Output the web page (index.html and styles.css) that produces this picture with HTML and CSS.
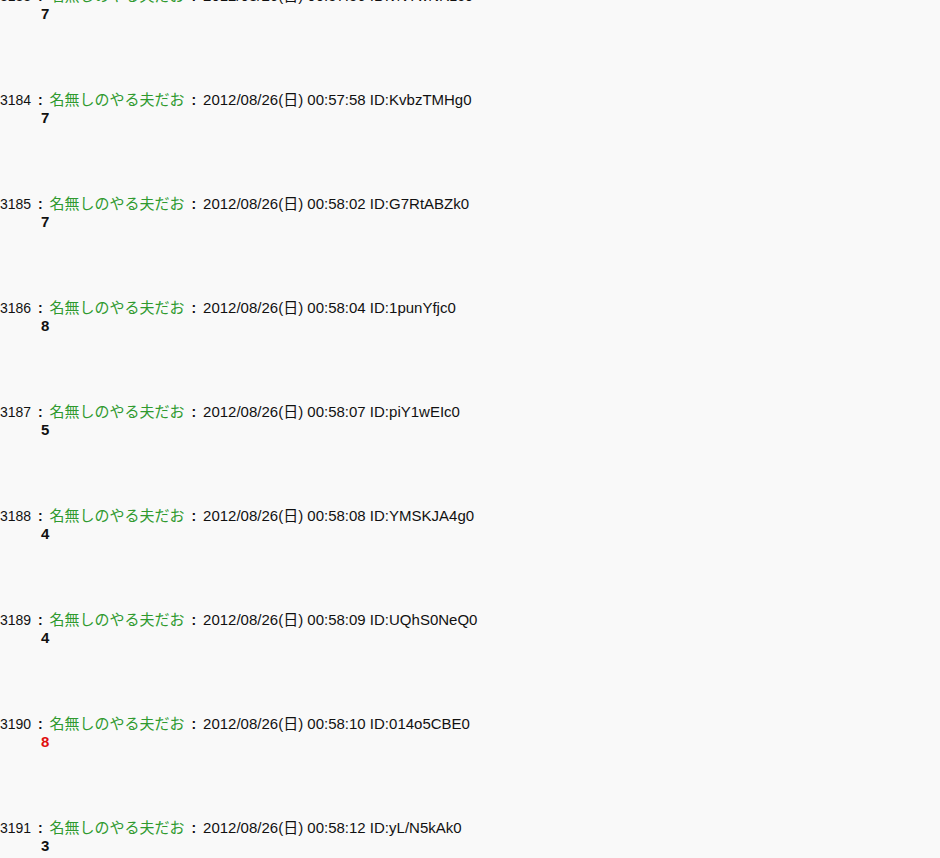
FILE: index.html
```html
<!DOCTYPE html>
<html lang="ja">
<head>
    <meta charset="UTF-8">
    <title>やる夫スレ</title>
    <link rel="stylesheet" href="styles.css">
</head>
<body>
    <dl class="thread">
        <dt>3183 <b class="sep">:</b> <span class="name">名無しのやる夫だお</span> <b class="sep">:</b> <span class="date">2012/08/26(日) 00:57:56 ID:vNYwNRzc0</span></dt>
        <dd>7</dd>

        <dt>3184 <b class="sep">:</b> <span class="name">名無しのやる夫だお</span> <b class="sep">:</b> <span class="date">2012/08/26(日) 00:57:58 ID:KvbzTMHg0</span></dt>
        <dd>7</dd>

        <dt>3185 <b class="sep">:</b> <span class="name">名無しのやる夫だお</span> <b class="sep">:</b> <span class="date">2012/08/26(日) 00:58:02 ID:G7RtABZk0</span></dt>
        <dd>7</dd>

        <dt>3186 <b class="sep">:</b> <span class="name">名無しのやる夫だお</span> <b class="sep">:</b> <span class="date">2012/08/26(日) 00:58:04 ID:1punYfjc0</span></dt>
        <dd>8</dd>

        <dt>3187 <b class="sep">:</b> <span class="name">名無しのやる夫だお</span> <b class="sep">:</b> <span class="date">2012/08/26(日) 00:58:07 ID:piY1wEIc0</span></dt>
        <dd>5</dd>

        <dt>3188 <b class="sep">:</b> <span class="name">名無しのやる夫だお</span> <b class="sep">:</b> <span class="date">2012/08/26(日) 00:58:08 ID:YMSKJA4g0</span></dt>
        <dd>4</dd>

        <dt>3189 <b class="sep">:</b> <span class="name">名無しのやる夫だお</span> <b class="sep">:</b> <span class="date">2012/08/26(日) 00:58:09 ID:UQhS0NeQ0</span></dt>
        <dd>4</dd>

        <dt>3190 <b class="sep">:</b> <span class="name">名無しのやる夫だお</span> <b class="sep">:</b> <span class="date">2012/08/26(日) 00:58:10 ID:014o5CBE0</span></dt>
        <dd><span class="hit">8</span></dd>

        <dt>3191 <b class="sep">:</b> <span class="name">名無しのやる夫だお</span> <b class="sep">:</b> <span class="date">2012/08/26(日) 00:58:12 ID:yL/N5kAk0</span></dt>
        <dd>3</dd>
    </dl>
</body>
</html>
```

FILE: styles.css
```css
* {
    margin: 0;
    padding: 0;
    box-sizing: border-box;
}

body {
    background: #f9f9f9;
    color: #111;
    font-family: "Liberation Sans", "Noto Sans CJK JP", sans-serif;
    font-size: 14px;
    overflow: hidden;
}

/* scrolled part-way into the thread */
.thread {
    margin-top: -13px;
}

.thread dt {
    line-height: 18px;
    white-space: nowrap;
}

.thread dd {
    margin-left: 41px;
    line-height: 18px;
    font-size: 15px;
    font-weight: bold;
    margin-bottom: 68px;
}

.sep {
    margin: 0 3px;
}

.name {
    color: #2f9a2f;
    font-size: 15px;
}

.date {
    font-size: 15px;
}

.hit {
    color: #e01010;
}
```
